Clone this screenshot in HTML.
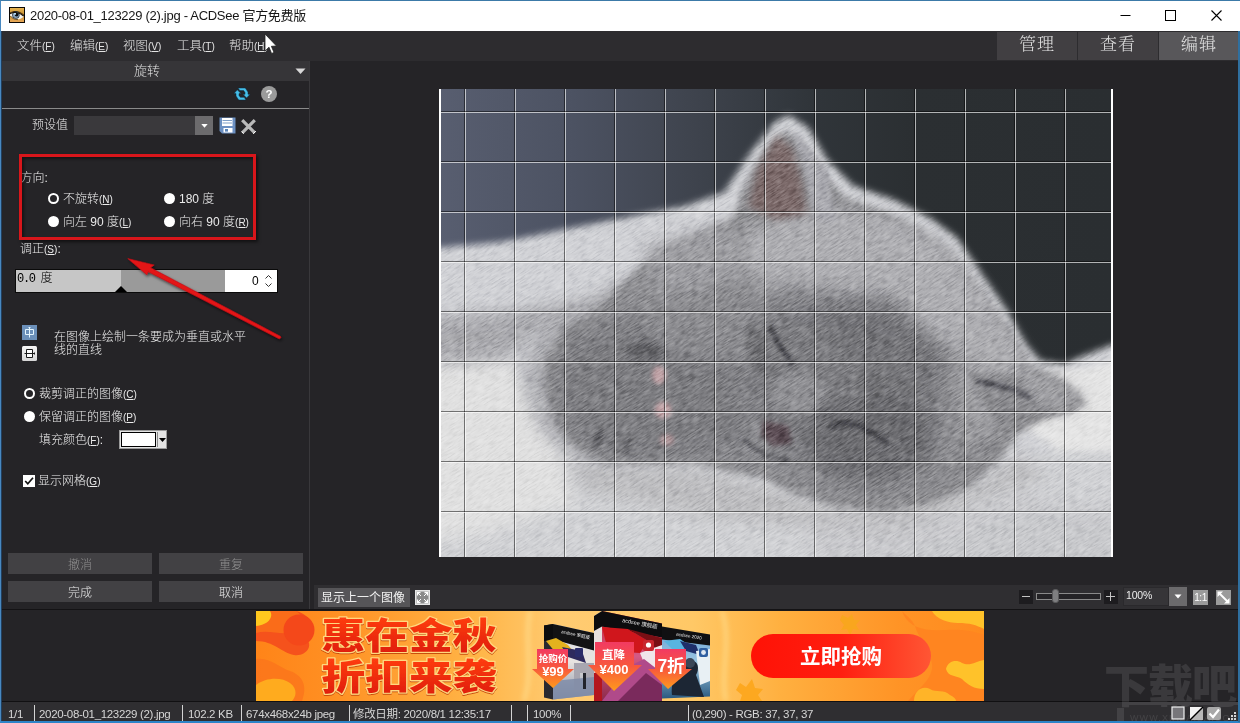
<!DOCTYPE html>
<html lang="zh-CN">
<head>
<meta charset="utf-8">
<title>ACDSee</title>
<style>
*{box-sizing:border-box;margin:0;padding:0}
html,body{width:1240px;height:723px;overflow:hidden;background:#252427}
body{position:relative;will-change:transform;font-family:"Liberation Sans","Noto Sans CJK SC",sans-serif;font-size:12px;color:#e6e6e6}
.abs{position:absolute}
.t{position:absolute;white-space:nowrap;line-height:16px}
u{text-decoration:underline;text-underline-offset:1px}
#frame{position:absolute;left:0;top:0;width:1240px;height:723px;border-left:1px solid #4888c0;border-top:1px solid #3c7aa8;border-bottom:2px solid #2c84c8;pointer-events:none;z-index:50}
#title{left:1px;top:1px;width:1239px;height:30px;background:#fff;color:#000}
#menubar{left:1px;top:31px;width:1239px;height:30px;background:#2d2c2f}
.menu{top:38px;color:#e4e4e4;font-size:12.5px;font-weight:300}
.menu .k{font-size:10px}
.tab{position:absolute;top:32px;height:28px;width:80px;background:#413f42;color:#e0e0e0;font-family:"Liberation Serif","Noto Serif CJK SC",serif;font-weight:300;font-size:17px;text-align:center;line-height:26px;letter-spacing:1px}
.tab.on{background:#58575a}
#panel{left:2px;top:61px;width:307px;height:547px;background:#252427}
#phead{left:2px;top:61px;width:307px;height:20px;background:#363538}
.btn{position:absolute;height:21px;width:144px;background:#424144;color:#e6e6e6;text-align:center;line-height:24px;font-size:12px;font-weight:300}
.btn.dis{color:#8f8f8f}
.radio{position:absolute;width:11px;height:11px;border-radius:50%;background:#fff}
.radio.on{background:#252427;border:2.5px solid #fff}
.lab{font-size:12px;color:#ebebeb;font-weight:300}
.lab .k{font-size:10px;letter-spacing:0}
.sb{top:706px;color:#d6d6d6;font-size:11.5px;letter-spacing:-.32px}
.sep{position:absolute;top:705px;width:1px;height:16px;background:#d4d4d4}
</style>
</head>
<body>
<div id="title" class="abs"></div>
<svg class="abs" style="left:9px;top:7px" width="16" height="16" viewBox="0 0 16 16">
<defs><linearGradient id="ig" x1="0" y1="0" x2="0" y2="1"><stop offset="0" stop-color="#e6b450"/><stop offset=".5" stop-color="#c89032"/><stop offset="1" stop-color="#e8a858"/></linearGradient></defs>
<rect x="0" y="0" width="16" height="16" fill="#0a0806"/>
<rect x="1" y="1" width="14" height="14" fill="url(#ig)"/>
<path d="M1 5.6 C4 3.4 10 3.2 15 7.6 L15 9 C11 5.6 5 5.2 1 7 Z" fill="#5a3a10"/>
<path d="M1 6.6 C4 4.6 10 4.8 14.6 9 C14 11.4 10 12.6 7 12.4 C4.6 12.2 2.4 10 1 8.4 Z" fill="#f6f4ee"/>
<circle cx="6.9" cy="8" r="3.7" fill="#1c2a38"/>
<circle cx="6.9" cy="8" r="3" fill="#8aa4bc"/>
<circle cx="7.6" cy="7.6" r="1.9" fill="#0a0e14"/>
<circle cx="6" cy="6.8" r="1.1" fill="#bfe4ff"/>
<path d="M1 6.8 C4 4.6 10 4.8 14.6 9" fill="none" stroke="#1a1208" stroke-width="1.1"/>
<path d="M1.5 9 C3.5 11.6 6 12.8 9 12.6" fill="none" stroke="#4a3210" stroke-width=".8"/>
</svg>
<div class="t" id="ttext" style="left:30px;top:8px;color:#151515;font-size:13px;line-height:16px;letter-spacing:-.29px">2020-08-01_123229 (2).jpg - ACDSee 官方免费版</div>
<svg class="abs" style="left:1100px;top:1px" width="139" height="30" viewBox="0 0 139 30">
<path d="M20.5 14.5 H30.5" stroke="#000" stroke-width="1" fill="none"/>
<rect x="65.5" y="9.5" width="10" height="10" stroke="#000" stroke-width="1" fill="none"/>
<path d="M111.5 9.5 L121.5 19.5 M121.5 9.5 L111.5 19.5" stroke="#000" stroke-width="1.1" fill="none"/>
</svg>

<div id="menubar" class="abs"></div>
<div class="t menu" style="left:17px">文件<span class="k">(<u>F</u>)</span></div>
<div class="t menu" style="left:70px">编辑<span class="k">(<u>E</u>)</span></div>
<div class="t menu" style="left:123px">视图<span class="k">(<u>V</u>)</span></div>
<div class="t menu" style="left:177px">工具<span class="k">(<u>T</u>)</span></div>
<div class="t menu" style="left:229px">帮助<span class="k">(<u>H</u>)</span></div>
<svg class="abs" style="left:262px;top:32px" width="16" height="24" viewBox="0 0 16 24">
<path d="M3 2 L3 19 L7 15.2 L9.6 21.5 L12 20.4 L9.4 14.3 L14.5 14 Z" fill="#fff" stroke="#222" stroke-width="0.8"/>
</svg>
<div class="tab" style="left:997px">管理</div>
<div class="tab" style="left:1078px">查看</div>
<div class="tab on" style="left:1159px">编辑</div>

<div id="phead" class="abs"></div>
<div class="t" style="left:134px;top:63px;font-size:13px;color:#e0e0e0;font-weight:300">旋转</div>
<svg class="abs" style="left:295px;top:68px" width="11" height="7" viewBox="0 0 11 7"><path d="M0.5 0.5 L10.5 0.5 L5.5 6 Z" fill="#d8d8d8"/></svg>
<svg class="abs" style="left:233px;top:85px" width="18" height="18" viewBox="0 0 18 18">
<g fill="#45bee8" stroke="#0b2a42" stroke-width=".5" stroke-linejoin="round">
<path d="M5 3 L12.3 3 L15 7 L15 9.3 L17 9.3 L13.6 13 L10 9.3 L12 9.3 L12 7.6 L10.6 5.6 L6.8 5.6 Z"/>
<path d="M4.3 4.8 L8 8.6 L6 8.6 L6 10.4 L7.4 12.3 L11.2 12.3 L13 15 L5.7 15 L3 11 L3 8.6 L1 8.6 Z"/>
</g>
</svg>
<svg class="abs" style="left:261px;top:86px" width="16" height="16" viewBox="0 0 16 16">
<circle cx="8" cy="8" r="8" fill="#9b9b9b"/>
<text x="8" y="12.2" text-anchor="middle" font-family="Liberation Sans, sans-serif" font-weight="bold" font-size="11.5" fill="#fff">?</text>
</svg>
<div class="abs" style="left:2px;top:108px;width:307px;height:1px;background:#8a8a8a"></div>
<div class="t lab" style="left:32px;top:117px">预设值</div>
<div class="abs" style="left:74px;top:116px;width:121px;height:19px;background:#3a393c"></div>
<div class="abs" style="left:195px;top:116px;width:18px;height:19px;background:#6c6b6d"></div>
<svg class="abs" style="left:201px;top:124px" width="7" height="4" viewBox="0 0 7 4"><path d="M0.3 0 L6.7 0 L3.5 3.8 Z" fill="#fff"/></svg>
<svg class="abs" style="left:219px;top:117px" width="17" height="17" viewBox="0 0 17 17">
<path d="M0.5 0.5 H16.5 V16.5 H3 L0.5 14 Z" fill="#6c90c2"/>
<rect x="3" y="1" width="10.5" height="8" fill="#fff"/>
<path d="M3.5 3.5 H13 M3.5 6 H13" stroke="#7f9fc8" stroke-width="1"/>
<rect x="4.5" y="11" width="9" height="4.5" fill="#fff"/>
<rect x="6" y="12" width="3" height="2.6" fill="#5a84b8"/>
</svg>
<svg class="abs" style="left:240px;top:118px" width="17" height="17" viewBox="0 0 17 17">
<path d="M2.2 2.2 L14.8 14.8 M14.8 2.2 L2.2 14.8" stroke="#b9b9b9" stroke-width="3.2" stroke-linecap="butt"/><path d="M13.2 15.8 L15.8 13.2 M1.8 13.6 L3.6 15.6" stroke="#fff" stroke-width="1" />
</svg>
<div class="t lab" style="left:20.5px;top:170px">方向:</div>
<div class="radio on" style="left:48px;top:193px"></div>
<div class="t lab" style="left:63px;top:191px">不旋转<span class="k">(<u>N</u>)</span></div>
<div class="radio" style="left:164px;top:193px"></div>
<div class="t lab" style="left:179px;top:191px">180 度</div>
<div class="radio" style="left:48px;top:216px"></div>
<div class="t lab" style="left:63px;top:214px">向左 90 度<span class="k">(<u>L</u>)</span></div>
<div class="radio" style="left:164px;top:216px"></div>
<div class="t lab" style="left:179px;top:214px">向右 90 度<span class="k">(<u>R</u>)</span></div>
<div class="abs" style="left:19px;top:154px;width:237px;height:86px;border:3px solid #d8161b;box-shadow:2px 2px 3px rgba(0,0,0,.55), inset 2px 2px 3px rgba(0,0,0,.45)"></div>
<div class="t lab" style="left:20px;top:241px">调正<span class="k">(<u>S</u>)</span>:</div>
<div class="abs" style="left:15px;top:269px;width:263px;height:24px;background:#0a0a0a"></div>
<div class="abs" style="left:16px;top:270px;width:105px;height:22px;background:#c6c6c6"></div>
<div class="abs" style="left:121px;top:270px;width:104px;height:22px;background:#9a9a9a"></div>
<div class="abs" style="left:225px;top:270px;width:52px;height:22px;background:#fff"></div>
<svg class="abs" style="left:115px;top:286px" width="12" height="6" viewBox="0 0 12 6"><path d="M0 6 L6 0 L12 6 Z" fill="#000"/></svg>
<div class="t" style="left:17px;top:271px;color:#000;font-size:12px;font-family:'Liberation Mono','Noto Sans CJK SC',monospace;letter-spacing:-1.3px;font-weight:300">0.0 度</div>
<div class="t" style="left:252px;top:273px;color:#000;font-size:12px">0</div>
<svg class="abs" style="left:264px;top:274px" width="9" height="14" viewBox="0 0 9 14"><path d="M1.5 4.5 L4.5 1.5 L7.5 4.5 M1.5 9.5 L4.5 12.5 L7.5 9.5" stroke="#333" stroke-width="1" fill="none"/></svg>
<svg class="abs" style="left:110px;top:250px;z-index:5" width="190" height="100" viewBox="110 250 190 100">
<defs><filter id="ash" x="-10%" y="-10%" width="120%" height="130%"><feDropShadow dx="1.2" dy="1.8" stdDeviation="1.4" flood-color="#000" flood-opacity=".6"/></filter></defs>
<path filter="url(#ash)" d="M127.7 258.5 L154.2 265 L150.6 267.7 L280.4 336.3 Q281.6 337.6 279.9 338.6 Q279 338.8 278.4 338.4 L148.4 271.8 L146.8 274.8 Z" fill="#e31318" stroke="#c01015" stroke-width=".6" stroke-linejoin="round"/>
</svg>
<div class="abs" style="left:22px;top:325px;width:15px;height:15px;background:#6b90ba"></div>
<svg class="abs" style="left:22px;top:325px" width="15" height="15" viewBox="0 0 15 15"><path d="M3.5 4.5 H11.5 V9.5 H3.5 Z M7.5 2 V12.5 M6.5 2.5 H8.5" stroke="#e4f6ff" stroke-width="1" fill="none"/></svg>
<div class="abs" style="left:22px;top:346px;width:15px;height:15px;background:linear-gradient(#f6f6f6,#d6d6d6);border-radius:1.5px"></div>
<svg class="abs" style="left:22px;top:346px" width="15" height="15" viewBox="0 0 15 15"><rect x="4.5" y="3.5" width="6" height="8" fill="#fff"/><path d="M4.5 3.5 H10.5 V11.5 H4.5 Z M2.5 7.5 H12.5 M12.5 6.5 V8.5" stroke="#1a1a1a" stroke-width="1" fill="none"/></svg>
<div class="t lab" style="left:54px;top:331px;line-height:13px">在图像上绘制一条要成为垂直或水平<br>线的直线</div>
<div class="radio on" style="left:24px;top:388px"></div>
<div class="t lab" style="left:39px;top:386px">裁剪调正的图像<span class="k">(<u>C</u>)</span></div>
<div class="radio" style="left:24px;top:411px"></div>
<div class="t lab" style="left:39px;top:409px">保留调正的图像<span class="k">(<u>P</u>)</span></div>
<div class="t lab" style="left:39px;top:432px">填充颜色<span class="k">(<u>F</u>)</span>:</div>
<div class="abs" style="left:119px;top:430px;width:48px;height:19px;background:#e4e4e4;border:1px solid #9a9a9a"></div>
<div class="abs" style="left:121px;top:432px;width:35px;height:15px;background:#fff;border:1px solid #000"></div>
<div class="abs" style="left:157px;top:432px;width:1px;height:15px;background:#8a8a8a"></div>
<svg class="abs" style="left:159px;top:438px" width="7" height="4" viewBox="0 0 7 4"><path d="M0 0 L7 0 L3.5 4 Z" fill="#000"/></svg>
<div class="abs" style="left:23px;top:475px;width:12px;height:12px;background:#fff"></div>
<svg class="abs" style="left:23px;top:475px" width="12" height="12" viewBox="0 0 12 12"><path d="M2.2 6 L4.8 8.8 L10 2.8" stroke="#111" stroke-width="1.7" fill="none"/></svg>
<div class="t lab" style="left:38px;top:473px">显示网格<span class="k">(<u>G</u>)</span></div>
<div class="btn dis" style="left:8px;top:553px">撤消</div>
<div class="btn dis" style="left:159px;top:553px">重复</div>
<div class="btn" style="left:8px;top:581px">完成</div>
<div class="btn" style="left:159px;top:581px">取消</div>
<div class="abs" style="left:309px;top:61px;width:1px;height:548px;background:#39383b"></div>
<div class="abs" style="left:2px;top:609px;width:1238px;height:1px;background:#141315;z-index:4"></div>

<svg class="abs" id="cat" style="left:439px;top:89px" width="674" height="468" viewBox="0 0 674 468">
<defs>
<linearGradient id="bgg" x1="0" y1="0" x2="1" y2="0">
<stop offset="0" stop-color="#585e70"/><stop offset=".2" stop-color="#4c5262"/><stop offset=".37" stop-color="#3f444e"/><stop offset=".55" stop-color="#30353a"/><stop offset=".7" stop-color="#2b2f32"/><stop offset="1" stop-color="#2a2e31"/>
</linearGradient>
<filter id="b3" x="-20%" y="-20%" width="140%" height="140%"><feGaussianBlur stdDeviation="3"/></filter>
<filter id="b6" x="-20%" y="-20%" width="140%" height="140%"><feGaussianBlur stdDeviation="6"/></filter>
<filter id="b12" x="-30%" y="-30%" width="160%" height="160%"><feGaussianBlur stdDeviation="12"/></filter>
<filter id="fur" x="0" y="0" width="100%" height="100%" color-interpolation-filters="sRGB">
<feTurbulence type="fractalNoise" baseFrequency="0.07 0.45" numOctaves="3" seed="11" result="n"/>
<feColorMatrix in="n" type="matrix" values="2 0 0 0 -0.5  2 0 0 0 -0.5  2 0 0 0 -0.5  0 0 0 0 1"/>
</filter>
<mask id="catmask" maskUnits="userSpaceOnUse" x="0" y="0" width="1041" height="723"><rect width="1041" height="723" fill="#000"/><path filter="url(#b6)" fill="#fff" d="M-30 248 L100 236 L200 216 L300 196 L380 181 L440 160 L480 100 L520 50 L540 40 L570 60 L600 110 L640 150 L700 170 L760 200 L800 230 L842 292 L878 345 L906 395 L928 420 L965 425 L1000 410 L1041 395 L1080 388 L1080 770 L-30 770 Z"/></mask>
<clipPath id="cc"><rect x="0" y="0" width="674" height="468"/></clipPath>
</defs>
<g clip-path="url(#cc)">
<rect width="674" height="468" fill="url(#bgg)"/>
<g transform="scale(0.64745)">
<path filter="url(#b6)" fill="#d0d1d5" d="M-30 248 L100 236 L200 216 L300 196 L380 181 L440 160 L480 100 L520 50 L540 40 L570 60 L600 110 L640 150 L700 170 L760 200 L800 230 L842 292 L878 345 L906 395 L928 420 L965 425 L1000 410 L1041 395 L1080 388 L1080 770 L-30 770 Z"/>
<path filter="url(#b12)" fill="#d0d1d4" d="M-30 430 L120 425 L150 520 L220 590 L420 610 L700 660 L900 580 L1000 520 L1080 500 L1080 770 L-30 770 Z"/>
<path filter="url(#b12)" fill="#e0e0e0" d="M-30 420 L115 418 L140 500 L190 570 L210 640 L60 690 L-30 700 Z"/>
<path filter="url(#b12)" fill="#bdbdc0" d="M200 575 L420 590 L640 650 L830 610 L900 560 L940 600 L700 690 L400 660 L220 620 Z"/>
<path filter="url(#b6)" fill="#e4e4e4" d="M900 440 L1000 430 L1080 410 L1080 560 L960 560 L900 520 Z"/>
<path filter="url(#b12)" fill="#c4c4c8" d="M560 660 L760 670 L900 620 L1000 650 L1080 620 L1080 770 L600 770 Z" opacity=".6"/>
<path filter="url(#b12)" fill="#a9a9ad" d="M-30 352 L120 342 L230 325 L310 285 L345 270 L300 325 L220 362 L150 374 L110 414 L60 420 L-30 424 Z"/>
<path filter="url(#b12)" fill="#a6a6aa" d="M150 368 L230 338 L300 345 L260 585 L200 566 L158 528 L138 480 L130 430 Z" opacity=".8"/>
<path filter="url(#b6)" fill="#8c8c90" d="M455 199 L400 222 L340 246 L295 290 L240 342 L190 370 L168 408 L162 450 L170 490 L188 528 L218 558 L258 576 L330 578 L400 578 L450 592 L500 600 L540 622 L620 648 L700 652 L760 640 L820 615 L868 572 L892 534 L930 510 L975 496 L998 487 L985 472 L960 447 L918 428 L898 398 L868 350 L830 300 L790 249 L750 219 L690 189 L630 169 L590 129 L560 84 L535 64 L500 97 L470 152 Z"/>
<path filter="url(#b12)" fill="#a6a6aa" d="M310 240 L450 205 L480 290 L340 320 Z" opacity=".7"/>
<path filter="url(#b12)" fill="#b4b4b8" d="M470 215 L600 180 L700 195 L780 235 L845 315 L895 395 L925 435 L860 445 L780 390 L640 350 L520 330 L470 270 Z" opacity=".85"/>
<path filter="url(#b12)" fill="#7e7e82" d="M200 388 L300 350 L340 400 L460 420 L480 500 L470 560 L330 570 L262 570 L224 550 L198 518 L184 480 L182 432 Z"/>
<ellipse filter="url(#b3)" cx="246" cy="540" rx="7" ry="18" fill="#505054" opacity=".6" transform="rotate(20 246 540)"/>
<ellipse filter="url(#b3)" cx="290" cy="552" rx="6" ry="14" fill="#505054" opacity=".5" transform="rotate(10 290 552)"/>
<path filter="url(#b12)" fill="#77777b" d="M520 300 L700 320 L780 420 L760 560 L620 600 L520 560 L470 440 Z" opacity=".7"/>
<ellipse filter="url(#b6)" cx="555" cy="470" rx="42" ry="34" fill="#9e9ea2" opacity=".6"/>
<ellipse filter="url(#b6)" cx="490" cy="400" rx="14" ry="42" fill="#5e5e62" opacity=".55" transform="rotate(-12 490 400)"/>
<ellipse filter="url(#b6)" cx="318" cy="405" rx="26" ry="16" fill="#4c4c50" opacity=".6"/>
<ellipse filter="url(#b6)" cx="700" cy="470" rx="60" ry="30" fill="#6c6c70" opacity=".5" transform="rotate(25 700 470)"/>
<path filter="url(#b12)" fill="#626266" d="M590 485 L690 475 L760 505 L760 575 L690 610 L605 596 L560 545 Z" opacity=".6"/>
<path filter="url(#b12)" fill="#aaaaae" d="M805 370 L880 405 L905 450 L870 520 L810 555 L795 450 Z" opacity=".6"/>
<path filter="url(#b12)" fill="#6a6a6e" d="M600 330 L710 330 L770 400 L750 450 L660 420 L590 380 Z" opacity=".45"/>
<path filter="url(#b6)" fill="#7c6a6a" d="M478 182 L492 122 L522 72 L546 92 L560 142 L568 192 L520 202 Z"/>
<path filter="url(#b3)" fill="#a8a8ae" d="M545 62 L600 122 L612 205 L580 200 L565 130 Z"/>
<path filter="url(#b6)" fill="#8a8a8e" d="M820 442 L900 440 L960 455 L1000 486 L930 510 L860 522 Z"/>
<path filter="url(#b12)" fill="#a8a8ac" d="M900 430 L950 440 L1000 480 L960 500 L900 470 Z" opacity=".8"/>
<path filter="url(#b3)" fill="none" stroke="#4c4c53" stroke-width="7" d="M830 452 C860 455 890 462 915 478"/>
<path filter="url(#b3)" fill="none" stroke="#34343a" stroke-width="6" stroke-linecap="round" d="M512 368 C522 392 535 410 546 424"/>
<path filter="url(#b3)" fill="none" stroke="#34343a" stroke-width="6" stroke-linecap="round" d="M606 522 C626 510 650 516 690 545"/>
<path filter="url(#b3)" fill="#5c4e54" d="M500 512 L540 520 L545 548 L515 552 L498 535 Z"/>
<path filter="url(#b3)" fill="none" stroke="#4a4a50" stroke-width="5" d="M470 540 C490 560 510 570 540 575"/>
<ellipse filter="url(#b3)" cx="340" cy="442" rx="11" ry="14" fill="#bfa2a6"/>
<ellipse filter="url(#b3)" cx="346" cy="496" rx="13" ry="13" fill="#c2a4a8"/>
<ellipse filter="url(#b3)" cx="352" cy="542" rx="11" ry="9" fill="#ad9498"/>
<g mask="url(#catmask)" style="mix-blend-mode:soft-light" opacity=".42"><rect x="-400" y="-400" width="1900" height="1600" filter="url(#fur)" transform="rotate(-32 520 360)"/></g>

</g>
</g>
<rect x="25" y="0" width="1" height="468" fill="#000" opacity=".5"/><rect x="26" y="0" width="1" height="468" fill="#fff" opacity=".64"/><rect x="75" y="0" width="1" height="468" fill="#000" opacity=".5"/><rect x="76" y="0" width="1" height="468" fill="#fff" opacity=".64"/><rect x="125" y="0" width="1" height="468" fill="#000" opacity=".5"/><rect x="126" y="0" width="1" height="468" fill="#fff" opacity=".64"/><rect x="175" y="0" width="1" height="468" fill="#000" opacity=".5"/><rect x="176" y="0" width="1" height="468" fill="#fff" opacity=".64"/><rect x="225" y="0" width="1" height="468" fill="#000" opacity=".5"/><rect x="226" y="0" width="1" height="468" fill="#fff" opacity=".64"/><rect x="275" y="0" width="1" height="468" fill="#000" opacity=".5"/><rect x="276" y="0" width="1" height="468" fill="#fff" opacity=".64"/><rect x="325" y="0" width="1" height="468" fill="#000" opacity=".5"/><rect x="326" y="0" width="1" height="468" fill="#fff" opacity=".64"/><rect x="375" y="0" width="1" height="468" fill="#000" opacity=".5"/><rect x="376" y="0" width="1" height="468" fill="#fff" opacity=".64"/><rect x="425" y="0" width="1" height="468" fill="#000" opacity=".5"/><rect x="426" y="0" width="1" height="468" fill="#fff" opacity=".64"/><rect x="475" y="0" width="1" height="468" fill="#000" opacity=".5"/><rect x="476" y="0" width="1" height="468" fill="#fff" opacity=".64"/><rect x="525" y="0" width="1" height="468" fill="#000" opacity=".5"/><rect x="526" y="0" width="1" height="468" fill="#fff" opacity=".64"/><rect x="575" y="0" width="1" height="468" fill="#000" opacity=".5"/><rect x="576" y="0" width="1" height="468" fill="#fff" opacity=".64"/><rect x="625" y="0" width="1" height="468" fill="#000" opacity=".5"/><rect x="626" y="0" width="1" height="468" fill="#fff" opacity=".64"/><rect x="0" y="22" width="674" height="1" fill="#000" opacity=".5"/><rect x="0" y="23" width="674" height="1" fill="#fff" opacity=".64"/><rect x="0" y="72" width="674" height="1" fill="#000" opacity=".5"/><rect x="0" y="73" width="674" height="1" fill="#fff" opacity=".64"/><rect x="0" y="122" width="674" height="1" fill="#000" opacity=".5"/><rect x="0" y="123" width="674" height="1" fill="#fff" opacity=".64"/><rect x="0" y="172" width="674" height="1" fill="#000" opacity=".5"/><rect x="0" y="173" width="674" height="1" fill="#fff" opacity=".64"/><rect x="0" y="222" width="674" height="1" fill="#000" opacity=".5"/><rect x="0" y="223" width="674" height="1" fill="#fff" opacity=".64"/><rect x="0" y="272" width="674" height="1" fill="#000" opacity=".5"/><rect x="0" y="273" width="674" height="1" fill="#fff" opacity=".64"/><rect x="0" y="322" width="674" height="1" fill="#000" opacity=".5"/><rect x="0" y="323" width="674" height="1" fill="#fff" opacity=".64"/><rect x="0" y="372" width="674" height="1" fill="#000" opacity=".5"/><rect x="0" y="373" width="674" height="1" fill="#fff" opacity=".64"/><rect x="0" y="422" width="674" height="1" fill="#000" opacity=".5"/><rect x="0" y="423" width="674" height="1" fill="#fff" opacity=".64"/><rect x="0" y="0" width="2" height="468" fill="#fff"/><rect x="672" y="0" width="2" height="468" fill="#fff"/>
</svg>

<div class="abs" style="left:314px;top:585px;width:926px;height:24px;background:#2f2e31"></div>
<div class="abs" style="left:318px;top:588px;width:92px;height:19px;background:#565558"></div>
<div class="t" style="left:321px;top:590px;font-size:12px;color:#f2f2f2;font-weight:400">显示上一个图像</div>
<svg class="abs" style="left:415px;top:590px" width="15" height="15" viewBox="0 0 15 15">
<rect x="0" y="0" width="15" height="15" fill="#e6e6e6"/><rect x="1.5" y="1.5" width="12" height="12" fill="#8a8a8a"/>
<path d="M2.5 5.5 V2.5 H5.5 M9.5 2.5 H12.5 V5.5 M12.5 9.5 V12.5 H9.5 M5.5 12.5 H2.5 V9.5" stroke="#fff" stroke-width="1.3" fill="none"/>
<path d="M3 3 L6 6 M12 3 L9 6 M12 12 L9 9 M3 12 L6 9" stroke="#fff" stroke-width="1" fill="none"/>
</svg>
<div class="abs" style="left:1019px;top:590px;width:14px;height:14px;background:#1d1c1f"></div>
<div class="abs" style="left:1022px;top:596px;width:8px;height:1px;background:#c4c4c4"></div>
<div class="abs" style="left:1036px;top:593px;width:65px;height:7px;border:1px solid #8a8a8a;background:#242326"></div>
<div class="abs" style="left:1052px;top:589px;width:7px;height:14px;background:#7e7e80;border-radius:3px;border:1px solid #5a5a5c"></div>
<div class="abs" style="left:1104px;top:590px;width:14px;height:14px;background:#1d1c1f"></div>
<div class="abs" style="left:1106px;top:596px;width:9px;height:1px;background:#c4c4c4"></div>
<div class="abs" style="left:1110px;top:592px;width:1px;height:9px;background:#c4c4c4"></div>
<div class="abs" style="left:1123px;top:587px;width:46px;height:19px;background:#363538;border:1px solid #2a292c"></div>
<div class="t" style="left:1126px;top:587px;font-size:10.5px;color:#ececec;letter-spacing:-.2px">100%</div>
<div class="abs" style="left:1169px;top:587px;width:18px;height:19px;background:#6b6a6c"></div>
<svg class="abs" style="left:1174px;top:594px" width="8" height="5" viewBox="0 0 8 5"><path d="M0.5 0.5 L7.5 0.5 L4 4.5 Z" fill="#fff"/></svg>
<div class="abs" style="left:1193px;top:590px;width:15px;height:15px;background:#9b9b9b"></div>
<div class="t" style="left:1193px;top:590px;width:15px;text-align:center;font-size:10px;line-height:15px;color:#fff;letter-spacing:-.5px">1:1</div>
<svg class="abs" style="left:1216px;top:590px" width="15" height="15" viewBox="0 0 15 15">
<rect width="15" height="15" fill="#9b9b9b"/>
<path d="M3.5 3.5 L11.5 11.5" stroke="#fff" stroke-width="2" fill="none"/>
<path d="M1.5 1.5 H7 L1.5 7 Z M13.5 13.5 H8 L13.5 8 Z" fill="#fff"/>
</svg>

<div class="abs" style="left:256px;top:610px;width:728px;height:1px;background:#1a191b"></div>
<svg class="abs" id="banner" style="left:256px;top:611px" width="728" height="90" viewBox="0 0 728 90">
<defs>
<linearGradient id="bn" x1="0" y1="0" x2="1" y2="0">
<stop offset="0" stop-color="#ff8418"/><stop offset=".1" stop-color="#ff8f22"/><stop offset=".3" stop-color="#ffb446"/><stop offset=".42" stop-color="#ffcb72"/><stop offset=".6" stop-color="#ffc866"/><stop offset=".72" stop-color="#ffb040"/><stop offset=".88" stop-color="#ff9426"/><stop offset="1" stop-color="#ff8a1e"/>
</linearGradient>
<linearGradient id="tx" x1="0" y1="0" x2="0" y2="1"><stop offset="0" stop-color="#ff3d12"/><stop offset="1" stop-color="#dc1a08"/></linearGradient>
<linearGradient id="pill" x1="0" y1="0" x2="1" y2="0"><stop offset="0" stop-color="#ff1206"/><stop offset=".5" stop-color="#ff1e10"/><stop offset="1" stop-color="#ff5634"/></linearGradient>
<linearGradient id="bdg" x1="0" y1="0" x2="0" y2="1"><stop offset="0" stop-color="#f23a62"/><stop offset=".5" stop-color="#f8583c"/><stop offset="1" stop-color="#ff9a1c"/></linearGradient>
<linearGradient id="bx1" x1="0" y1="0" x2="0" y2="1"><stop offset="0" stop-color="#d8dce6"/><stop offset=".5" stop-color="#e8e4e0"/><stop offset="1" stop-color="#8a93a8"/></linearGradient>
<linearGradient id="bx2" x1="0" y1="0" x2="0" y2="1"><stop offset="0" stop-color="#c8202a"/><stop offset=".5" stop-color="#d45a86"/><stop offset="1" stop-color="#8c2a4a"/></linearGradient>
<linearGradient id="bx3" x1="0" y1="0" x2="0" y2="1"><stop offset="0" stop-color="#6aa4d8"/><stop offset=".5" stop-color="#9cc6e0"/><stop offset="1" stop-color="#2a5a80"/></linearGradient>
<filter id="bb2" x="-20%" y="-20%" width="140%" height="140%"><feGaussianBlur stdDeviation="2.5"/></filter>
<clipPath id="bc"><rect width="728" height="90"/></clipPath>
</defs>
<g clip-path="url(#bc)">
<rect width="728" height="90" fill="url(#bn)"/>
<path d="M0 0 H40 C56 4 60 18 50 28 C58 34 50 46 38 44 C26 42 18 30 0 30 Z" fill="#f5521c"/>
<path d="M0 0 H40 C50 6 46 16 38 20 C28 26 14 18 0 22 Z" fill="#fb6f1a" opacity=".9"/>
<circle cx="43" cy="19" r="15.5" fill="#f4481a"/>
<path d="M0 0 H14 C18 6 12 14 0 15 Z" fill="#ffc81e"/>
<path d="M0 48 C14 46 22 56 34 60 C46 64 52 74 46 90 H0 Z" fill="#fb741c" opacity=".8"/>
<path d="M0 74 C10 66 26 66 34 72 C42 78 40 86 36 90 H0 Z" fill="#ffab1e"/>
<path d="M646 0 C650 12 660 18 676 19 C694 20 704 16 728 24 V90 H652 C662 78 674 70 676 58 C678 44 664 30 660 18 C658 10 652 6 646 0 Z" fill="#ff8420" opacity=".9"/>
<path d="M676 0 C680 8 692 12 702 12 C714 12 720 14 728 18 V0 Z" fill="#ffc22a"/>
<path d="M690 58 C692 50 700 48 706 52 C714 56 720 50 728 49 V78 C718 78 712 74 706 68 C700 64 692 66 690 58 Z" fill="#ffc22a"/>
<path d="M658 90 C658 80 666 74 674 78 C680 82 688 78 694 84 C698 86 700 88 700 90 Z" fill="#ffb428"/>
<g fill="#ffe9a0" opacity=".55" filter="url(#bb2)"><path d="M272 0 C266 30 276 60 266 90 L270 90 C280 60 270 30 276 0 Z"/><path d="M464 0 C474 30 462 60 468 90 L472 90 C466 60 478 30 468 0 Z"/></g>
<path d="M586 4 l6 3 l4 -4 l2 6 l6 0 l-4 5 l3 5 l-6 -1 l-3 6 l-3 -6 l-6 1 l3 -5 l-4 -5 z" fill="#f9a61e"/>
<path d="M484 72 l6 4 l6 -8 l3 9 l8 1 l-5 6 l4 6 h-22 l2 -6 l-6 -5 z" fill="#fda820"/>
<!-- boxes -->
<g>
<path d="M288 14.5 L297 13 L297 88.5 L288 86.5 Z" fill="#2a2a30"/>
<path d="M297 13 L338 22 L338 84 L297 88.5 Z" fill="url(#bx1)"/>
<path d="M297 13 L338 22 L338 39.5 L297 28.5 Z" fill="#121214"/>
<path d="M288 14.5 L297 13 L297 28.5 L288 30 Z" fill="#0c0c0e"/>
<path d="M290 30 L300 27 L312 34 L322 46 L300 42 Z" fill="#e3b21e"/>
<path d="M306 36 L326 40 L330 52 L312 46 Z" fill="#2e2a5e"/>
<path d="M318 52 H338 V80 H330 V62 H324 V80 H318 Z" fill="#a8a6b0"/>
<path d="M297 70 L338 66 L338 84 L297 88.5 Z" fill="#7c8aa6" opacity=".8"/>
<rect x="327" y="62" width="3" height="16" fill="#22242c"/>
<path d="M406 17 L454 24 L454 85.5 L406 87.5 Z" fill="url(#bx3)"/>
<path d="M406 15.5 L454 23.5 L454 34.5 L406 28.5 Z" fill="#101012"/>
<path d="M408 30 L424 28 L436 36 L420 42 Z" fill="#58b4e0"/><path d="M424 30 L440 34 L444 44 L430 40 Z" fill="#1e2f6a"/>
<path d="M440 40 L454 38 L454 70 L444 74 Z" fill="#e8f0f4"/>
<path d="M416 84 C414 66 426 52 434 50 C442 48 444 58 440 64 L448 86 Z" fill="#1c2634"/>
<circle cx="434" cy="52" r="5" fill="#3a4656"/>
<path d="M338 5 L346 0 L346 90 L338 90 Z" fill="#e8e0e0"/>
<path d="M346 0 L406 12.5 L406 90 L346 90 Z" fill="url(#bx2)"/>
<path d="M338 5 L346 0 L406 12.5 L406 26.5 L346 15.5 L338 20 Z" fill="#0c0c0e"/>
<path d="M346 16 L372 18 L392 30 L384 42 L352 40 Z" fill="#d0161c"/>
<path d="M372 18 L406 27 L406 44 L392 30 Z" fill="#7a0e14"/>
<path d="M384 42 L406 34 L406 56 L392 62 Z" fill="#f0e6ea"/>
<path d="M346 90 L372 56 L388 48 L406 62 V90 Z" fill="#b04a8a"/>
<path d="M362 90 L390 62 L406 74 V90 Z" fill="#7a2a5c"/>
<path d="M338 62 L346 60 L346 90 L338 90 Z" fill="#b4161e"/>
<rect x="387" y="29" width="11" height="11" rx="2" fill="#c8262e"/><circle cx="392.5" cy="34" r="2.6" fill="#fff"/>
<rect x="443" y="37" width="9" height="9" rx="2" fill="#2e5ea0"/><circle cx="447.5" cy="41.5" r="2.4" fill="#dfe8f2"/>
<rect x="319" y="37" width="8" height="9" rx="1" fill="#2a2c6a"/>
<g fill="#e8e8e8" font-family="Liberation Sans, Noto Sans CJK SC, sans-serif" font-size="4.5"><text x="305" y="22" transform="rotate(12 305 22)">acdsee 家庭版</text><text x="366" y="11" transform="rotate(11 366 11)" font-size="5.5">acdsee 旗舰版</text><text x="420" y="24.5" transform="rotate(9 420 24.5)">acdsee 2020</text></g>
</g>
<!-- badges -->
<path d="M281 38 H312 V58 H318 L297 77 L276 58 H281 Z" fill="url(#bdg)"/>
<path d="M339 31 H378 V54 H386 L358 80 L332 54 H339 Z" fill="url(#bdg)"/>
<path d="M399 38 H430 V58 H436 L412 78 L392 58 H399 Z" fill="url(#bdg)"/>
<g fill="#fff" font-family="Liberation Sans, Noto Sans CJK SC, sans-serif" font-weight="bold" text-anchor="middle">
<text x="297" y="50.5" font-size="9.5">抢购价</text><text x="297" y="64.5" font-size="13">¥99</text>
<text x="357.5" y="47.5" font-size="11.5">直降</text><text x="358" y="62.5" font-size="13">¥400</text>
<text x="415" y="61" font-size="17.5">7折</text>
</g>
<!-- headline -->
<filter id="tsh" x="-5%" y="-10%" width="110%" height="130%"><feMorphology in="SourceAlpha" operator="dilate" radius=".3" result="d"/><feOffset in="d" dy="1.4" result="o"/><feFlood flood-color="#c8500c"/><feComposite in2="o" operator="in" result="sh"/><feMerge><feMergeNode in="sh"/><feMergeNode in="SourceGraphic"/></feMerge></filter>
<g filter="url(#tsh)" font-family="Liberation Sans, Noto Sans CJK SC, sans-serif" font-weight="900" font-size="36.5" text-anchor="middle" transform="translate(153 0) scale(1.2 1)">
<text x="0" y="38" fill="url(#tx)" stroke="#ffd77e" stroke-width="2.4" stroke-linejoin="round" paint-order="stroke">惠在金秋</text>
<text x="0" y="79.5" fill="url(#tx)" stroke="#ffd77e" stroke-width="2.4" stroke-linejoin="round" paint-order="stroke">折扣来袭</text>
</g>
<rect x="495" y="23" width="180" height="44" rx="22" fill="url(#pill)"/>
<text x="585" y="52.5" text-anchor="middle" font-family="Liberation Sans, Noto Sans CJK SC, sans-serif" font-weight="bold" font-size="20.5" fill="#fff">立即抢购</text>
</g>
</svg>
<div class="abs" style="left:1100px;top:660px;width:140px;height:63px;overflow:hidden;z-index:5;opacity:.095;color:#fff">
<div class="t" style="left:4px;top:0;font-size:45px;line-height:56px;font-weight:900;letter-spacing:-1px">下载吧</div>
<div class="abs" style="left:29px;top:42px;width:111px;height:3px;background:#fff"></div>
<div class="abs" style="left:17px;top:48px;width:7px;height:15px;background:#fff"></div>
<div class="t" style="left:30px;top:52px;font-size:9px;line-height:12px;letter-spacing:1.1px;font-weight:300;text-transform:uppercase">www.xiazaiba.com</div>
</div>

<div class="abs" style="left:2px;top:701px;width:1238px;height:1px;background:#111012"></div>
<div class="abs" style="left:2px;top:702px;width:1238px;height:19px;background:#2f2e31"></div>
<div class="t sb" style="left:8px">1/1</div>
<div class="sep" style="left:34px"></div>
<div class="t sb" style="left:39px">2020-08-01_123229 (2).jpg</div>
<div class="sep" style="left:182px"></div>
<div class="t sb" style="left:188px">102.2 KB</div>
<div class="sep" style="left:241px"></div>
<div class="t sb" style="left:246px">674x468x24b jpeg</div>
<div class="sep" style="left:349px"></div>
<div class="t sb" style="left:353px">修改日期: 2020/8/1 12:35:17</div>
<div class="sep" style="left:511px"></div>
<div class="sep" style="left:527px"></div>
<div class="t sb" style="left:533px">100%</div>
<div class="sep" style="left:570px"></div>
<div class="sep" style="left:688px"></div>
<div class="t sb" style="left:692px">(0,290) - RGB: 37, 37, 37</div>
<svg class="abs" style="left:1171px;top:706px;z-index:6" width="68" height="15" viewBox="0 0 68 15">
<rect x="1" y="1" width="12" height="12" fill="#77767a" stroke="#f0f0f0" stroke-width="1.2"/>
<rect x="19" y="1" width="13" height="13" fill="#b8b8b8"/><path d="M19 1 H32 L19 14 Z" fill="#f4f4f4"/><path d="M32 1 L19 14" stroke="#000" stroke-width="1.4"/>
<rect x="36" y="1" width="14" height="13" rx="2" fill="#a8a8a8"/><path d="M38.5 7.5 L42 11 L48 3.5" stroke="#fff" stroke-width="2.2" fill="none"/>
<g fill="#d4d4d4"><rect x="63" y="6" width="2" height="2"/><rect x="60" y="9" width="2" height="2"/><rect x="63" y="9" width="2" height="2"/><rect x="57" y="12" width="2" height="2"/><rect x="60" y="12" width="2" height="2"/><rect x="63" y="12" width="2" height="2"/></g>
</svg>

<div class="abs" style="left:1px;top:31px;width:1px;height:690px;background:#213f5e;z-index:51"></div>
<div class="abs" style="left:1238px;top:31px;width:2px;height:691px;background:#2f6f9f;z-index:51"></div>
<div id="frame"></div>
</body>
</html>
